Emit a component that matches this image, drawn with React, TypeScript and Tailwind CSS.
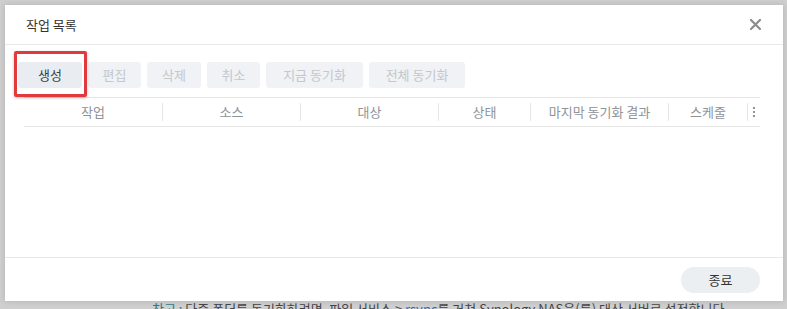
import React from 'react';

const font = { fontFamily: '"Noto Sans CJK KR", "Noto Sans", sans-serif' };

const tools = [
  { label: '편집', w: 'w-[53px]' },
  { label: '삭제', w: 'w-[54px]' },
  { label: '취소', w: 'w-[53px]' },
  { label: '지금 동기화', w: 'w-[97px]' },
  { label: '전체 동기화', w: 'w-[96px]' },
];

const columns = [
  { label: '작업', w: 'w-[139px]' },
  { label: '소스', w: 'w-[138px]' },
  { label: '대상', w: 'w-[138px]' },
  { label: '상태', w: 'w-[92px]' },
  { label: '마지막 동기화 결과', w: 'w-[138px]' },
  { label: '스케줄', w: 'w-[79px]' },
];

export default function App() {
  return (
    <div className="w-[787px] h-[309px] overflow-hidden bg-[#cfcfcf] pt-[5px] pl-[5px]" style={font}>
      <div className="w-[778px] h-[296px] bg-white flex flex-col shadow-[0_0_6px_rgba(0,0,0,0.15)]">
        {/* header */}
        <div className="h-[40px] shrink-0 border-b border-[#e8e8e8] flex items-center justify-between pl-[21px] pr-[21px]">
          <span className="text-[13px] text-[#333]">작업 목록</span>
          <svg width="11" height="11" viewBox="0 0 11 11" className="mr-[1px]">
            <path d="M1 1L10 10M10 1L1 10" stroke="#8c8c8c" strokeWidth="2.2" strokeLinecap="round" />
          </svg>
        </div>

        {/* toolbar */}
        <div className="relative flex items-center gap-[6px] pl-[13px] pt-[17px]">
          <button className="w-[64px] h-[26px] rounded-[3px] bg-[#e9edf1] text-[13px] text-[#3c4248]">생성</button>
          {tools.map((t) => (
            <button
              key={t.label}
              className={`${t.w} h-[26px] rounded-[3px] bg-[#f0f2f5] text-[13px] text-[#c3c8cd]`}
            >
              {t.label}
            </button>
          ))}
          <div className="absolute left-[9px] top-[6px] w-[73px] h-[46px] border-[3px] border-[#e2393c] rounded-[2px] shadow-[0_1px_3px_rgba(0,0,0,0.25)]" />
        </div>

        {/* table header */}
        <div className="mt-[9px] ml-[19px] w-[736px] h-[30px] border-y border-[#e6e6e6] flex items-center">
          {columns.map((c) => (
            <div
              key={c.label}
              className={`${c.w} h-[18px] border-r border-[#e6e6e6] flex items-center justify-center text-[13px] text-[#8e9398]`}
            >
              {c.label}
            </div>
          ))}
          <div className="flex-1 flex flex-col items-center justify-center gap-[2px]">
            <span className="w-[2px] h-[2px] bg-[#8e9398]" />
            <span className="w-[2px] h-[2px] bg-[#8e9398]" />
            <span className="w-[2px] h-[2px] bg-[#8e9398]" />
          </div>
        </div>

        <div className="flex-1" />

        {/* footer */}
        <div className="h-[44px] shrink-0 border-t border-[#e8e8e8] flex justify-end pt-[9px] pr-[23px]">
          <button className="w-[79px] h-[26px] rounded-full bg-[#eceff2] text-[13px] text-[#333]">종료</button>
        </div>
      </div>

      <div className="mt-[0px] pl-[147px] whitespace-nowrap text-[13px] leading-[16px] text-[#444]">
        <span className="text-[#1d7d8c]">참고 : </span>
        다중 폴더를 동기화하려면, 파일 서비스 &gt; <span className="text-[#1f6fc0]">rsync</span>를 거쳐 Synology NAS을(를) 대상 서버로 설정합니다
      </div>
    </div>
  );
}
